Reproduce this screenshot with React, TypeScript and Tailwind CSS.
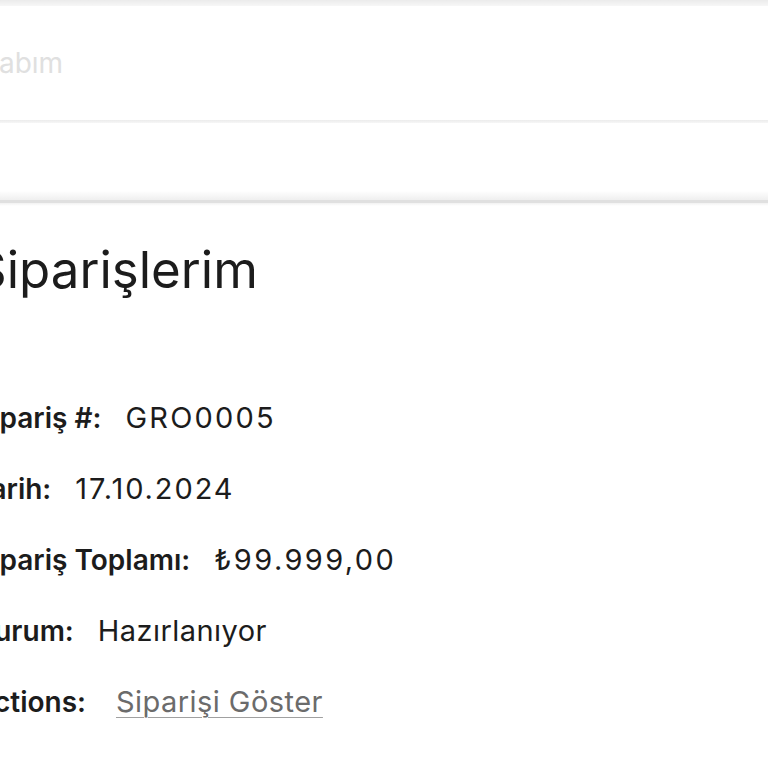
const rows: { label: string; value: string; track: string; link?: boolean }[] = [
  { label: "Sipariş #:", value: "GRO0005", track: "tracking-[2.2px]" },
  { label: "Tarih:", value: "17.10.2024", track: "tracking-[1.9px]" },
  { label: "Sipariş Toplamı:", value: "₺99.999,00", track: "tracking-[2.4px]" },
  { label: "Durum:", value: "Hazırlanıyor", track: "tracking-[0.45px]" },
  { label: "Actions:", value: "Siparişi Göster", track: "tracking-[0.45px]", link: true },
];

export default function App() {
  return (
    <div className="w-[768px] h-[768px] overflow-hidden bg-white font-['Inter','Liberation_Sans',sans-serif] text-[#1c1c1c]">
      <div className="h-[6px] bg-gradient-to-b from-[#ebebeb] to-[#f7f7f7]" />
      <header className="h-[114px] flex items-center">
        <span className="-ml-[53px] text-[28px] text-[#e0e0e0]">Hesabım</span>
      </header>
      <div className="h-[3px] bg-gradient-to-b from-[#ececec] to-[#f6f6f6]" />
      <div className="h-[77px] bg-gradient-to-b from-white from-88% to-[#efefef]" />
      <div className="h-[3px] bg-[#e0e0e0]" />
      <div className="h-[3px] bg-gradient-to-b from-[#f2f2f2] to-white" />

      <main className="-ml-[26px] pt-[38px]">
        <h1 className="text-[51px] leading-none font-normal">Siparişlerim</h1>
        <div className="mt-[87px] flex flex-col">
          {rows.map((row) => (
            <div key={row.label} className="flex items-baseline gap-[24px] h-[71px] leading-[71px]">
              <span className="text-[28px] font-semibold">{row.label}</span>
              {row.link ? (
                <a href="#" className={`ml-[6px] text-[29px] ${row.track} text-[#6b6b6b] underline decoration-[#a0a0a0] decoration-1 underline-offset-[5px]`}>
                  {row.value}
                </a>
              ) : (
                <span className={`text-[29px] ${row.track}`}>{row.value}</span>
              )}
            </div>
          ))}
        </div>
      </main>
    </div>
  );
}
